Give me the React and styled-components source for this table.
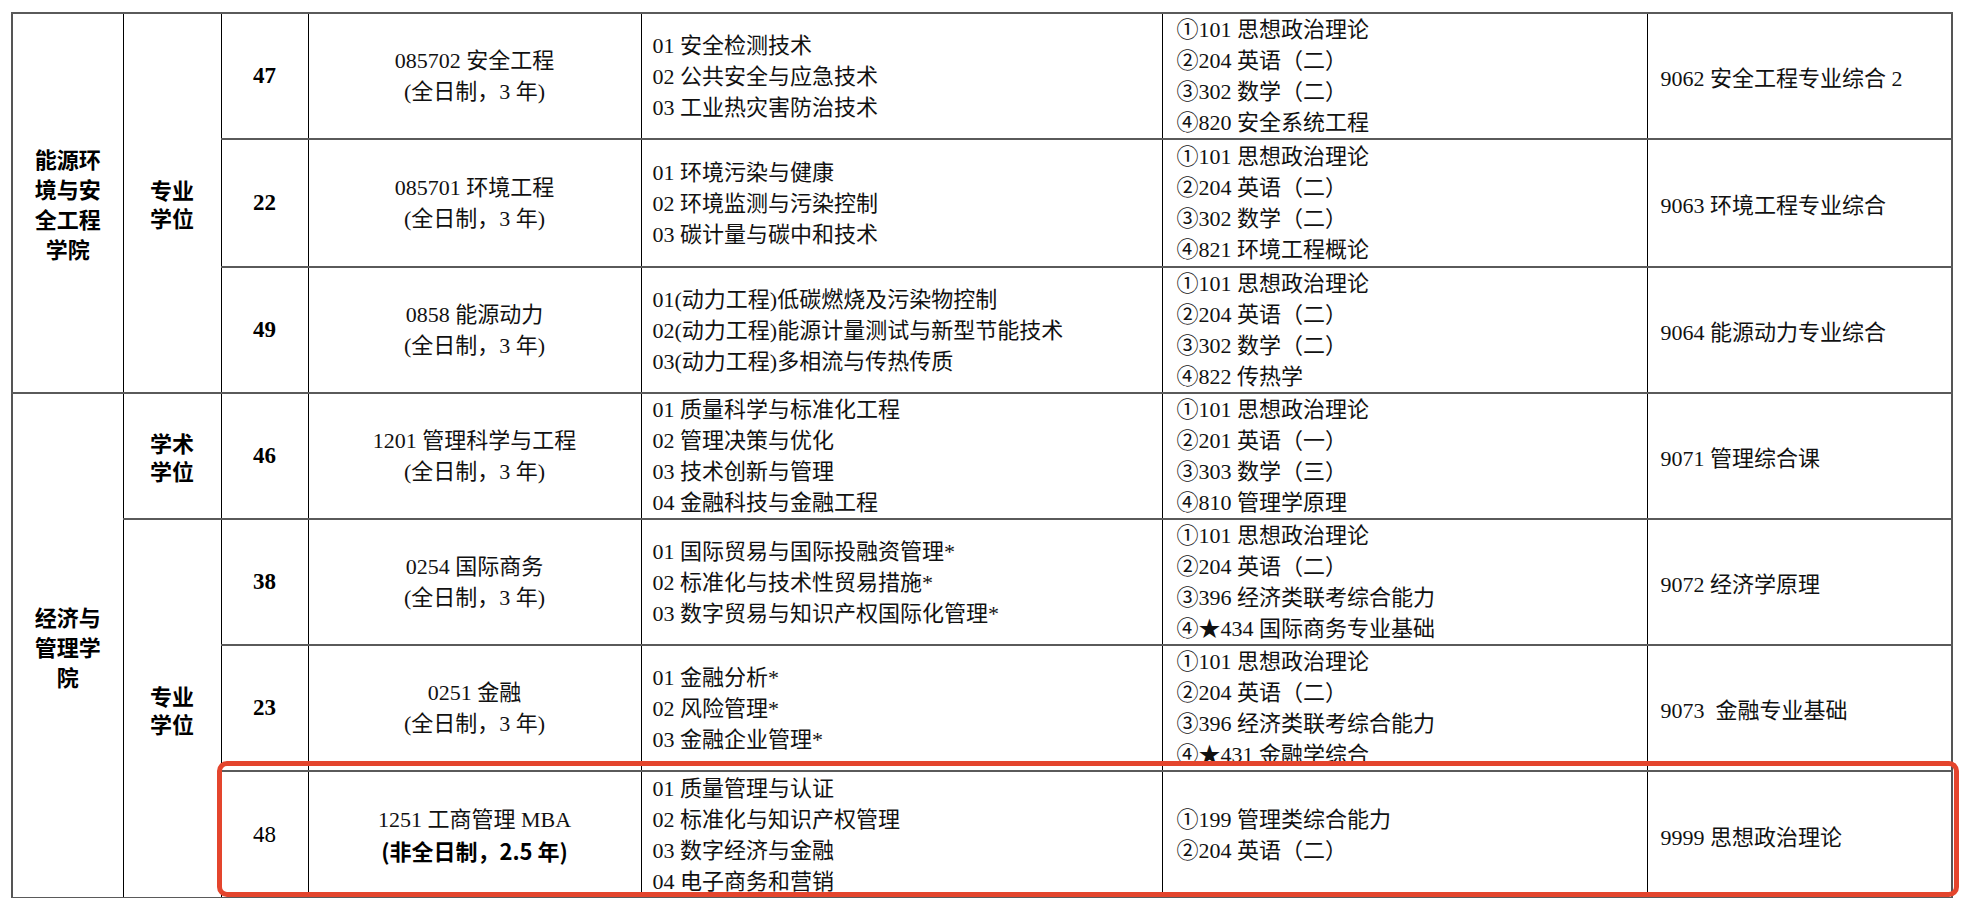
import React from 'react';
import styled, { createGlobalStyle } from 'styled-components';

const GlobalStyle = createGlobalStyle`
  html, body {
    margin: 0;
    background: #fff;
    overflow: hidden;
  }
`;

const Page = styled.div`
  padding: 12px 0 0 11px;
`;

const Frame = styled.div`
  position: relative;
  width: 1941px;
`;

const Sheet = styled.table`
  width: 1941px;
  border-collapse: collapse;
  table-layout: fixed;
  border: 2px solid #555;
  font-family: 'Liberation Serif', 'Noto Sans CJK SC', serif;
  font-size: 22px;
  color: #111;
`;

const Row = styled.tr`
  height: ${(p) => p.$h}px;
`;

const Cell = styled.td`
  padding: 0;
  border-left: 1px solid #000;
  border-right: 1px solid #000;
  border-top: 2px solid #5a5a5a;
  border-bottom: 2px solid #5a5a5a;
  vertical-align: middle;
`;

const GroupCell = styled(Cell)`
  text-align: center;
  font-family: 'Noto Sans CJK SC', 'Liberation Sans', sans-serif;
  font-weight: 700;
  font-size: 22px;
  line-height: ${(p) => p.$lh}px;
  color: #000;
`;

/* width in em makes the CJK label wrap after n characters */
const GroupText = styled.span`
  display: inline-block;
  width: ${(p) => p.$chars}em;
`;

const NoCell = styled(Cell)`
  text-align: center;
  font-weight: ${(p) => (p.$plain ? 400 : 700)};
  font-size: 23px;
  color: #000;
`;

const MajorCell = styled(Cell)`
  text-align: center;
  line-height: 31px;
`;

const Strong = styled.div`
  font-family: 'Noto Sans CJK SC', 'Liberation Sans', sans-serif;
  font-weight: 700;
  color: #000;
`;

const ListCell = styled(Cell)`
  padding-left: ${(p) => p.$pad}px;
  line-height: 31px;
  white-space: nowrap;
  overflow: hidden;
`;

const Line = styled.div`
  height: 31px;
`;

const ReviewCell = styled(Cell)`
  padding-left: 13px;
  white-space: pre;
`;

const Highlight = styled.div`
  position: absolute;
  left: 206px;
  top: 749px;
  width: 1742px;
  height: 136px;
  box-sizing: border-box;
  border: 5px solid #e4452d;
  border-radius: 10px;
  pointer-events: none;
`;

const widths = [111, 98, 87, 333, 521, 485, 305];

const rows = [
  {
    h: 122,
    college: '能源环境与安全工程学院',
    collegeSpan: 3,
    degree: '专业学位',
    degreeSpan: 3,
    no: '47',
    major: '085702 安全工程',
    mode: '(全日制，3 年)',
    dirs: ['01 安全检测技术', '02 公共安全与应急技术', '03 工业热灾害防治技术'],
    exams: ['①101 思想政治理论', '②204 英语（二）', '③302 数学（二）', '④820 安全系统工程'],
    review: '9062 安全工程专业综合 2',
  },
  {
    h: 128,
    no: '22',
    major: '085701 环境工程',
    mode: '(全日制，3 年)',
    dirs: ['01 环境污染与健康', '02 环境监测与污染控制', '03 碳计量与碳中和技术'],
    exams: ['①101 思想政治理论', '②204 英语（二）', '③302 数学（二）', '④821 环境工程概论'],
    review: '9063 环境工程专业综合',
  },
  {
    h: 126,
    no: '49',
    major: '0858 能源动力',
    mode: '(全日制，3 年)',
    dirs: [
      '01(动力工程)低碳燃烧及污染物控制',
      '02(动力工程)能源计量测试与新型节能技术',
      '03(动力工程)多相流与传热传质',
    ],
    exams: ['①101 思想政治理论', '②204 英语（二）', '③302 数学（二）', '④822 传热学'],
    review: '9064 能源动力专业综合',
  },
  {
    h: 125,
    college: '经济与管理学院',
    collegeSpan: 4,
    degree: '学术学位',
    degreeSpan: 1,
    no: '46',
    major: '1201 管理科学与工程',
    mode: '(全日制，3 年)',
    dirs: ['01 质量科学与标准化工程', '02 管理决策与优化', '03 技术创新与管理', '04 金融科技与金融工程'],
    exams: ['①101 思想政治理论', '②201 英语（一）', '③303 数学（三）', '④810 管理学原理'],
    review: '9071 管理综合课',
  },
  {
    h: 126,
    degree: '专业学位',
    degreeSpan: 3,
    no: '38',
    major: '0254 国际商务',
    mode: '(全日制，3 年)',
    dirs: ['01 国际贸易与国际投融资管理*', '02 标准化与技术性贸易措施*', '03 数字贸易与知识产权国际化管理*'],
    exams: ['①101 思想政治理论', '②204 英语（二）', '③396 经济类联考综合能力', '④★434 国际商务专业基础'],
    review: '9072 经济学原理',
  },
  {
    h: 125,
    no: '23',
    major: '0251 金融',
    mode: '(全日制，3 年)',
    dirs: ['01 金融分析*', '02 风险管理*', '03 金融企业管理*'],
    exams: ['①101 思想政治理论', '②204 英语（二）', '③396 经济类联考综合能力', '④★431 金融学综合'],
    review: '9073  金融专业基础',
  },
  {
    h: 127,
    no: '48',
    plain: true,
    major: '1251 工商管理 MBA',
    mode: '(非全日制，2.5 年)',
    strongMode: true,
    dirs: ['01 质量管理与认证', '02 标准化与知识产权管理', '03 数字经济与金融', '04 电子商务和营销'],
    exams: ['①199 管理类综合能力', '②204 英语（二）'],
    review: '9999 思想政治理论',
  },
];

const App = () => (
  <Page>
    <GlobalStyle />
    <Frame>
      <Sheet>
        <colgroup>
          {widths.map((w, i) => (
            <col key={i} style={{ width: w }} />
          ))}
        </colgroup>
        <tbody>
          {rows.map((r) => (
            <Row key={r.no} $h={r.h}>
              {r.college && (
                <GroupCell rowSpan={r.collegeSpan} $lh={30}>
                  <GroupText $chars={3}>{r.college}</GroupText>
                </GroupCell>
              )}
              {r.degree && (
                <GroupCell rowSpan={r.degreeSpan} $lh={28}>
                  <GroupText $chars={2}>{r.degree}</GroupText>
                </GroupCell>
              )}
              <NoCell $plain={r.plain}>{r.no}</NoCell>
              <MajorCell>
                <div>{r.major}</div>
                {r.strongMode ? <Strong>{r.mode}</Strong> : <div>{r.mode}</div>}
              </MajorCell>
              <ListCell $pad={11}>
                {r.dirs.map((d) => (
                  <Line key={d}>{d}</Line>
                ))}
              </ListCell>
              <ListCell $pad={14}>
                {r.exams.map((d) => (
                  <Line key={d}>{d}</Line>
                ))}
              </ListCell>
              <ReviewCell>{r.review}</ReviewCell>
            </Row>
          ))}
          <Row $h={40}>
            {widths.map((w, i) => (
              <Cell key={i} />
            ))}
          </Row>
        </tbody>
      </Sheet>
      <Highlight />
    </Frame>
  </Page>
);

export default App;
